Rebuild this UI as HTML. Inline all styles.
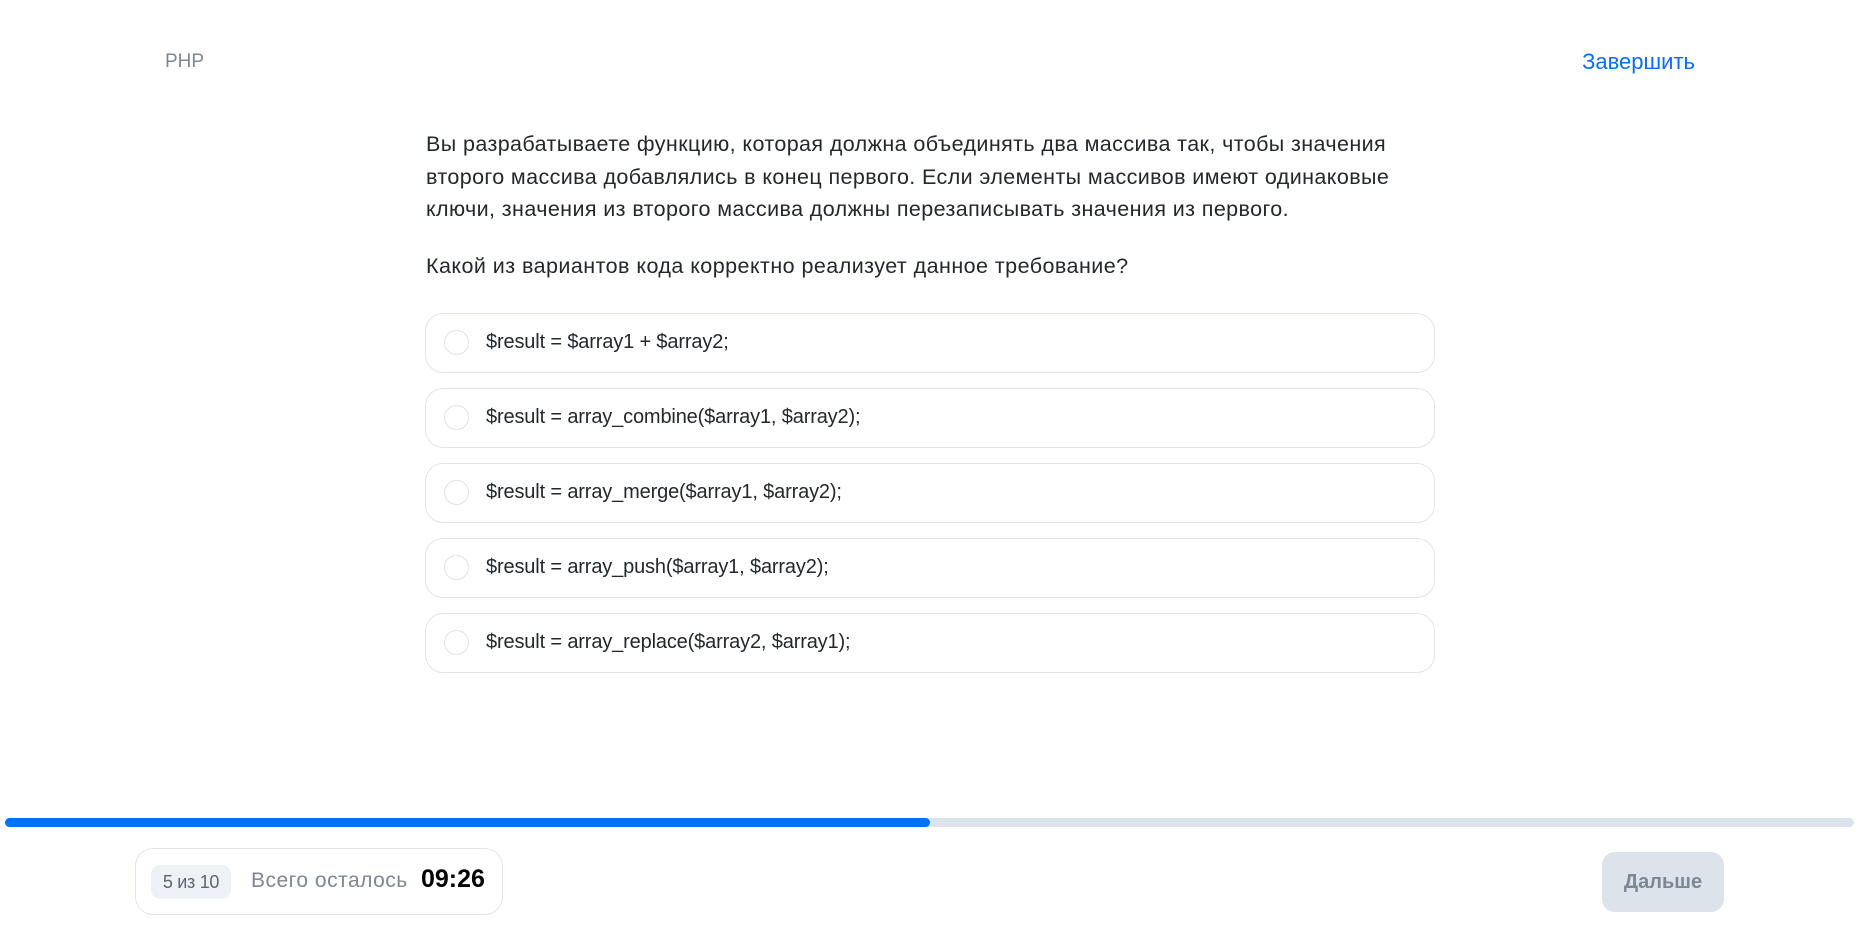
<!DOCTYPE html>
<html><head><meta charset="utf-8"><style>
*{margin:0;padding:0;box-sizing:border-box}
body{width:1860px;height:935px;background:#fff;font-family:"Liberation Sans",sans-serif;position:relative;overflow:hidden;color:#1f2329}
.abs{position:absolute}
.php{left:165px;top:51px;font-size:19px;color:#7d8793}
.fin{right:165px;top:49px;font-size:22px;color:#0a6cff}
.q{left:426px;top:128px;width:1040px;font-size:21.5px;line-height:32.5px;color:#24272c;letter-spacing:0.4px;white-space:nowrap}
.q2{left:426px;top:254px;font-size:21.5px;color:#24272c;letter-spacing:0.45px}
.opt{position:absolute;left:425px;width:1010px;height:60px;border:1.5px solid #e0e5ec;border-radius:18px}
.opt .r{position:absolute;left:18px;top:16px;width:25px;height:25px;border:1.5px solid #dde3ea;border-radius:50%}
.opt .t{position:absolute;left:60px;top:17px;font-size:20px;color:#24272c;letter-spacing:-0.15px}
.bar{left:5px;top:818px;width:1849px;height:9px;border-radius:5px;background:#dde3ea}
.fill{left:5px;top:818px;width:925px;height:9px;border-radius:5px;background:#0070ff}
.box{left:135px;top:848px;width:368px;height:67px;border:1.5px solid #e0e5ec;border-radius:18px}
.badge{left:151px;top:865px;width:80px;height:34px;border-radius:9px;background:#eef2f7;font-size:18px;color:#5d6670;text-align:center;line-height:34px;letter-spacing:-0.3px}
.rem{left:251px;top:869px;font-size:21px;color:#7d8793;letter-spacing:0.5px}
.time{left:421px;top:865px;font-size:25px;font-weight:bold;color:#000}
.btn{left:1602px;top:852px;width:122px;height:60px;border-radius:13px;background:#dde3ea;color:#7d8793;font-size:20px;font-weight:bold;text-align:center;line-height:60px}
</style></head><body>
<div class="abs php">PHP</div>
<div class="abs fin">Завершить</div>
<div class="abs q">Вы разрабатываете функцию, которая должна объединять два массива так, чтобы значения<br>второго массива добавлялись в конец первого. Если элементы массивов имеют одинаковые<br>ключи, значения из второго массива должны перезаписывать значения из первого.</div>
<div class="abs q2">Какой из вариантов кода корректно реализует данное требование?</div>
<div class="opt" style="top:313px"><div class="r"></div><div class="t">$result = $array1 + $array2;</div></div>
<div class="opt" style="top:388px"><div class="r"></div><div class="t">$result = array_combine($array1, $array2);</div></div>
<div class="opt" style="top:463px"><div class="r"></div><div class="t">$result = array_merge($array1, $array2);</div></div>
<div class="opt" style="top:538px"><div class="r"></div><div class="t">$result = array_push($array1, $array2);</div></div>
<div class="opt" style="top:613px"><div class="r"></div><div class="t">$result = array_replace($array2, $array1);</div></div>
<div class="abs bar"></div>
<div class="abs fill"></div>
<div class="abs box"></div>
<div class="abs badge">5 из 10</div>
<div class="abs rem">Всего осталось</div>
<div class="abs time">09:26</div>
<div class="abs btn">Дальше</div>
</body></html>
